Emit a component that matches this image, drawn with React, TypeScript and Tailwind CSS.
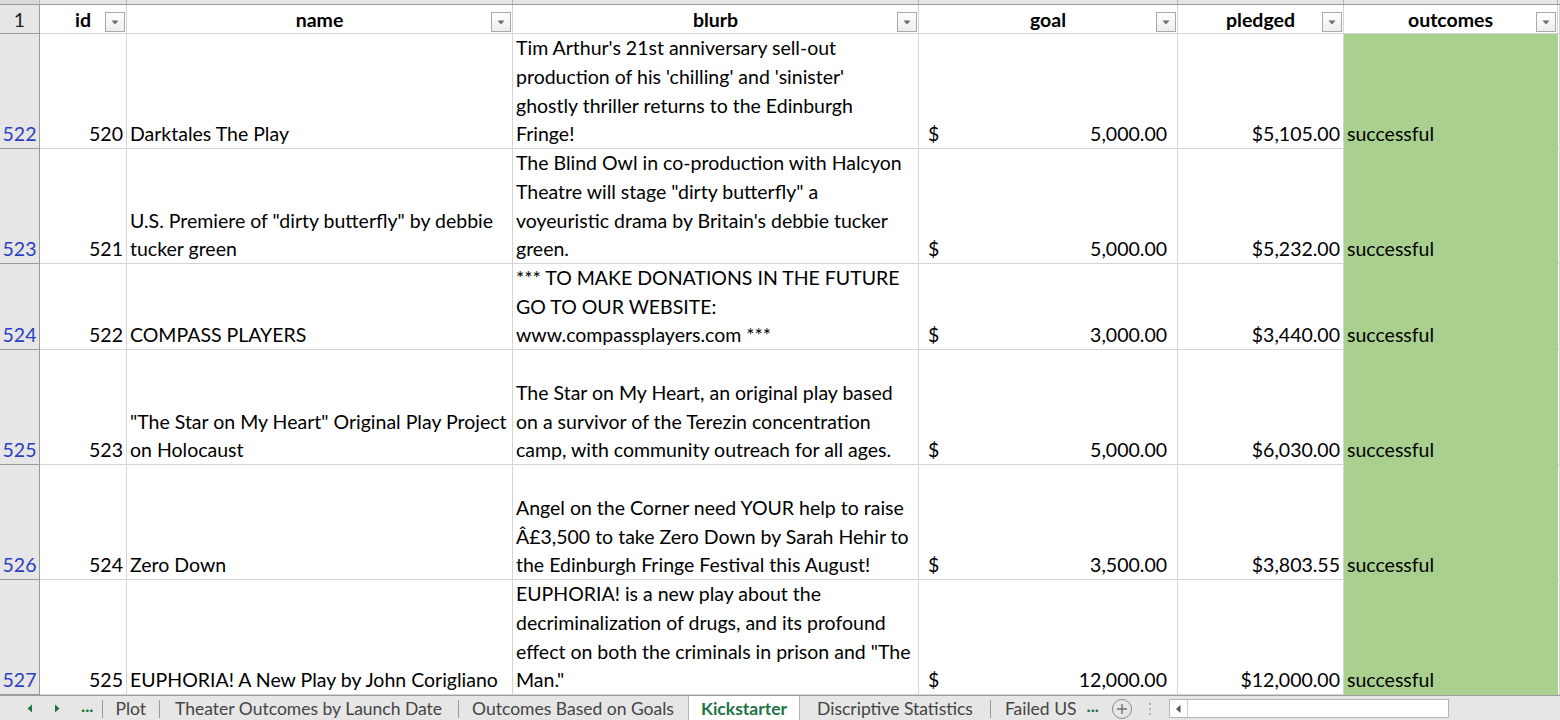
import React from "react";

type Row = {
  n: number;
  id: number;
  name: string[];
  blurb: string[];
  goal: string;
  pledged: string;
  h: string;
};

const rows: Row[] = [
  {
    n: 522,
    id: 520,
    name: ["Darktales The Play"],
    blurb: [
      "Tim Arthur's 21st anniversary sell-out",
      "production of his 'chilling' and 'sinister'",
      "ghostly thriller returns to the Edinburgh",
      "Fringe!",
    ],
    goal: "5,000.00",
    pledged: "$5,105.00",
    h: "h-[115px]",
  },
  {
    n: 523,
    id: 521,
    name: ['U.S. Premiere of "dirty butterfly" by debbie', "tucker green"],
    blurb: [
      "The Blind Owl in co-production with Halcyon",
      'Theatre will stage "dirty butterfly" a',
      "voyeuristic drama by Britain's debbie tucker",
      "green.",
    ],
    goal: "5,000.00",
    pledged: "$5,232.00",
    h: "h-[115px]",
  },
  {
    n: 524,
    id: 522,
    name: ["COMPASS PLAYERS"],
    blurb: [
      "*** TO MAKE DONATIONS IN THE FUTURE",
      "GO TO OUR WEBSITE:",
      "www.compassplayers.com ***",
    ],
    goal: "3,000.00",
    pledged: "$3,440.00",
    h: "h-[86px]",
  },
  {
    n: 525,
    id: 523,
    name: ['"The Star on My Heart" Original Play Project', "on Holocaust"],
    blurb: [
      "The Star on My Heart, an original play based",
      "on a survivor of the Terezin concentration",
      "camp, with community outreach for all ages.",
    ],
    goal: "5,000.00",
    pledged: "$6,030.00",
    h: "h-[115px]",
  },
  {
    n: 526,
    id: 524,
    name: ["Zero Down"],
    blurb: [
      "Angel on the Corner need YOUR help to raise",
      "Â£3,500 to take Zero Down by Sarah Hehir to",
      "the Edinburgh Fringe Festival this August!",
    ],
    goal: "3,500.00",
    pledged: "$3,803.55",
    h: "h-[115px]",
  },
  {
    n: 527,
    id: 525,
    name: ["EUPHORIA! A New Play by John Corigliano"],
    blurb: [
      "EUPHORIA! is a new play about the",
      "decriminalization of drugs, and its profound",
      'effect on both the criminals in prison and "The',
      'Man."',
    ],
    goal: "12,000.00",
    pledged: "$12,000.00",
    h: "h-[115px]",
  },
];

const cols = "grid grid-cols-[40px_87px_386px_406px_259px_166px_214px_1fr]";
const cell = "border-r border-b border-[#d4d4d4] overflow-hidden";

function FilterBtn() {
  return (
    <span className="absolute right-[1px] bottom-[1px] flex h-[20px] w-[20px] items-center justify-center border border-[#a9a9a9] bg-gradient-to-b from-white to-[#eeeeee]">
      <svg width="8" height="5" viewBox="0 0 8 5">
        <path d="M0.5 0.5h7L4 4.5z" fill="#6b6b6b" />
      </svg>
    </span>
  );
}

function Head({ label }: { label: string }) {
  return (
    <div className={`${cell} relative flex items-center justify-center pt-[1px] font-bold`}>
      {label}
      <FilterBtn />
    </div>
  );
}

function Lines({ lines }: { lines: string[] }) {
  return (
    <>
      {lines.map((l, i) => (
        <div key={i} className="whitespace-nowrap">
          {l}
        </div>
      ))}
    </>
  );
}

function Sep({ l, r }: { l: string; r: string }) {
  return <span className={`${l} ${r} h-[18px] w-px bg-[#9a9a9a]`} />;
}

export default function App() {
  return (
    <div
      className="h-[720px] w-[1560px] overflow-hidden bg-white text-[19.5px] text-black"
      style={{ fontFamily: "Lato, 'Open Sans', sans-serif" }}
    >
      {/* cut-off column header strip */}
      <div className={`${cols} h-[5px] border-b border-[#9b9b9b] bg-[#e6e6e6]`}>
        <div className="border-r border-[#b5b5b5] bg-[#dadada]" />
        <div className="border-r border-[#b5b5b5]" />
        <div className="border-r border-[#b5b5b5]" />
        <div className="border-r border-[#b5b5b5]" />
        <div className="border-r border-[#b5b5b5]" />
        <div className="border-r border-[#b5b5b5]" />
        <div className="border-r border-[#b5b5b5]" />
        <div />
      </div>

      {/* header row */}
      <div className={`${cols} h-[29px] leading-none`}>
        <div className="flex items-center justify-center border-r border-b border-[#9b9b9b] bg-[#e6e6e6] pt-[1px] text-[#222]">
          1
        </div>
        <Head label="id" />
        <Head label="name" />
        <Head label="blurb" />
        <Head label="goal" />
        <Head label="pledged" />
        <Head label="outcomes" />
        <div className={cell} />
      </div>

      {rows.map((r) => (
        <div key={r.n} className={`${cols} ${r.h} leading-[28.75px]`}>
          <div className="flex flex-col items-center justify-end border-r border-b border-[#9b9b9b] bg-[#e6e6e6] text-[#2a3fc0]">
            <span className="translate-y-[1px]">{r.n}</span>
          </div>
          <div className={`${cell} flex flex-col items-end justify-end pr-[3px]`}>
            <span className="translate-y-[1px]">{r.id}</span>
          </div>
          <div className={`${cell} flex flex-col justify-end pl-[3px]`}>
            <div className="translate-y-[1px]">
              <Lines lines={r.name} />
            </div>
          </div>
          <div className={`${cell} flex flex-col justify-end pl-[3px]`}>
            <div className="translate-y-[1px]">
              <Lines lines={r.blurb} />
            </div>
          </div>
          <div className={`${cell} flex items-end justify-between pl-[9px] pr-[10px]`}>
            <span className="translate-y-[1px]">$</span>
            <span className="translate-y-[1px]">{r.goal}</span>
          </div>
          <div className={`${cell} flex items-end justify-end pr-[3px]`}>
            <span className="translate-y-[1px]">{r.pledged}</span>
          </div>
          <div className="flex items-end overflow-hidden border-b border-[#a9d08e] bg-[#a9d08e] pl-[3px]">
            <span className="translate-y-[1px]">successful</span>
          </div>
          <div className={cell} />
        </div>
      ))}

      {/* sheet tabs */}
      <div className="flex h-[26px] items-center border-t border-[#9e9e9e] bg-[#e6e6e6] text-[17.5px] leading-none text-[#444]">
        <div className="flex items-center gap-[21px] pl-[27px] text-[#217346]">
          <svg width="6" height="9" viewBox="0 0 6 9">
            <path d="M5 0.5v8L0.5 4.5z" fill="#217346" />
          </svg>
          <svg width="6" height="9" viewBox="0 0 6 9">
            <path d="M1 0.5v8L5.5 4.5z" fill="#217346" />
          </svg>
          <span className="pb-[6px] font-bold">...</span>
        </div>
        <Sep l="ml-[9px]" r="mr-[12px]" />
        <span>Plot</span>
        <Sep l="ml-[13px]" r="mr-[15px]" />
        <span>Theater Outcomes by Launch Date</span>
        <Sep l="ml-[16px]" r="mr-[13px]" />
        <span>Outcomes Based on Goals</span>
        <span className="ml-[14px] flex h-full items-center border-x border-[#b5b5b5] bg-white px-[12px] font-bold text-[#217346]">
          Kickstarter
        </span>
        <span className="ml-[17px]">Discriptive Statistics</span>
        <Sep l="ml-[17px]" r="mr-[14px]" />
        <span>Failed US</span>
        <span className="ml-[10px] pb-[6px] font-bold text-[#217346]">...</span>
        <span className="ml-[13px] flex h-[20px] w-[20px] items-center justify-center rounded-full border border-[#8a8a8a] text-[#666]">
          <svg width="12" height="12" viewBox="0 0 12 12">
            <path d="M6 1v10M1 6h10" stroke="#707070" strokeWidth="1.4" />
          </svg>
        </span>
        <span className="ml-[17px] flex flex-col gap-[3px]">
          <span className="h-[2px] w-[2px] bg-[#b0b0b0]" />
          <span className="h-[2px] w-[2px] bg-[#b0b0b0]" />
          <span className="h-[2px] w-[2px] bg-[#b0b0b0]" />
        </span>
        <div className="ml-[18px] flex h-[19px] w-[280px] items-center border border-[#b5b5b5] bg-white">
          <span className="flex h-full w-[18px] items-center justify-center border-r border-[#d0d0d0]">
            <svg width="5" height="8" viewBox="0 0 5 8">
              <path d="M4.5 0v8L0 4z" fill="#555" />
            </svg>
          </span>
        </div>
      </div>
    </div>
  );
}
